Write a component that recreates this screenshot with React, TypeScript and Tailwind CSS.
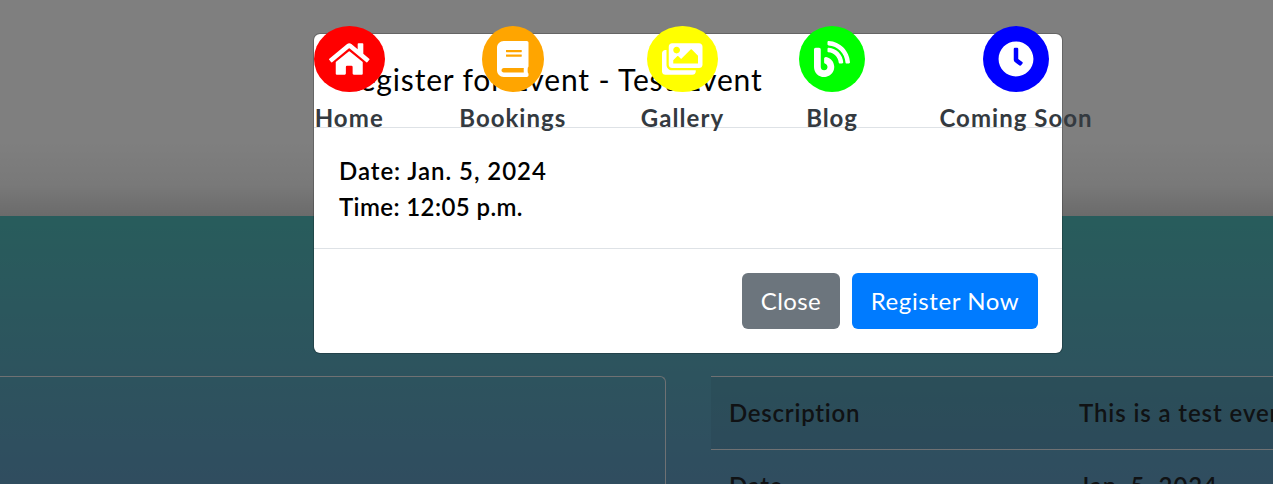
import type { ReactNode } from "react";
import { FaHome, FaBook, FaImages, FaBlog, FaClock } from "react-icons/fa";

type NavItemProps = { label: string; circle: string; tracking: string; width: string; children: ReactNode };

function NavItem({ label, circle, tracking, width, children }: NavItemProps) {
  return (
    <a href="#" className={`flex shrink-0 flex-col items-center ${width}`}>
      <span className={`flex h-[66px] items-center justify-center rounded-[50%] px-[15px] text-white ${circle}`}>
        {children}
      </span>
      <span className={`mt-2 text-2xl leading-[35px] font-bold whitespace-nowrap text-[#343a40] ${tracking}`}>
        {label}
      </span>
    </a>
  );
}

function EventRow({ name, value, className }: { name: string; value: string; className: string }) {
  return (
    <div className={`flex border-t border-[#dee2e6] ${className}`}>
      <div className="w-[350px] shrink-0 p-[18px] tracking-[0.75px]">{name}</div>
      <div className="p-[18px] tracking-[0.9px] whitespace-nowrap">{value}</div>
    </div>
  );
}

function EventPage() {
  return (
    <div className="flex h-full flex-col bg-white">
      <div className="h-[216px] shrink-0 bg-linear-to-b from-white from-[140px] via-[#f2f2f2] via-[185px] to-[#d6d6d6]" />
      <main className="flex grow items-stretch bg-linear-to-b from-[#50b9b8] to-[#609abf] pt-40">
        <section className="w-[666px] shrink-0 rounded-tr-md border-t border-r border-[#dee2e6]" />
        <section className="ml-[45px] h-[108px] w-[700px] shrink-0 overflow-hidden text-2xl leading-9 font-semibold text-[#212529]">
          <EventRow name="Description" value="This is a test event" className="bg-black/5" />
          <EventRow name="Date" value="Jan. 5, 2024" className="" />
        </section>
      </main>
    </div>
  );
}

function RegisterDialog() {
  return (
    <div
      role="dialog"
      className="mt-[33px] ml-[313px] w-[750px] rounded-[7px] border border-black/20 bg-white bg-clip-padding text-2xl leading-9 text-black"
    >
      <header className="border-b border-[#dee2e6] p-6">
        <h5 className="pb-0.5 pl-[3px] text-[30px] leading-[43px] tracking-[0.84px]">Register for Event - Test Event</h5>
      </header>
      <div className="px-[25px] pt-[25px] pb-[23px] font-semibold">
        <p className="tracking-[0.95px]">Date: Jan. 5, 2024</p>
        <p className="tracking-[0.4px]">Time: 12:05 p.m.</p>
      </div>
      <footer className="flex justify-end gap-3 border-t border-[#dee2e6] p-6 text-white">
        <button className="h-14 w-[98px] rounded-md bg-[#6c757d] tracking-[0.4px]">Close</button>
        <button className="h-14 w-[186px] rounded-md bg-[#007bff] tracking-[0.6px]">Register Now</button>
      </footer>
    </div>
  );
}

export default function App() {
  return (
    <div className="relative h-[484px] w-full overflow-hidden font-['Lato',sans-serif]">
      <EventPage />
      <div className="absolute inset-0 bg-black/50" />
      <div className="absolute inset-0">
        <RegisterDialog />
      </div>
      <nav className="absolute top-[26px] left-[314px] flex gap-[75px]">
        <NavItem label="Home" circle="bg-[#ff0000]" tracking="tracking-[1.1px]" width="w-[70.5px]">
          <FaHome className="h-9 w-[40.5px]" />
        </NavItem>
        <NavItem label="Bookings" circle="bg-[#ffa500]" tracking="tracking-[1px]" width="w-[106.5px]">
          <FaBook className="h-9 w-[31.5px]" />
        </NavItem>
        <NavItem label="Gallery" circle="bg-[#ffff00]" tracking="tracking-[1.1px]" width="w-[83px]">
          <FaImages className="h-9 w-[40.5px]" />
        </NavItem>
        <NavItem label="Blog" circle="bg-[#00ff00]" tracking="tracking-[0.9px]" width="w-[66px]">
          <FaBlog className="size-9" />
        </NavItem>
        <NavItem label="Coming Soon" circle="bg-[#0000ff]" tracking="tracking-[1.02px]" width="w-[152px]">
          <FaClock className="size-9" />
        </NavItem>
      </nav>
    </div>
  );
}
